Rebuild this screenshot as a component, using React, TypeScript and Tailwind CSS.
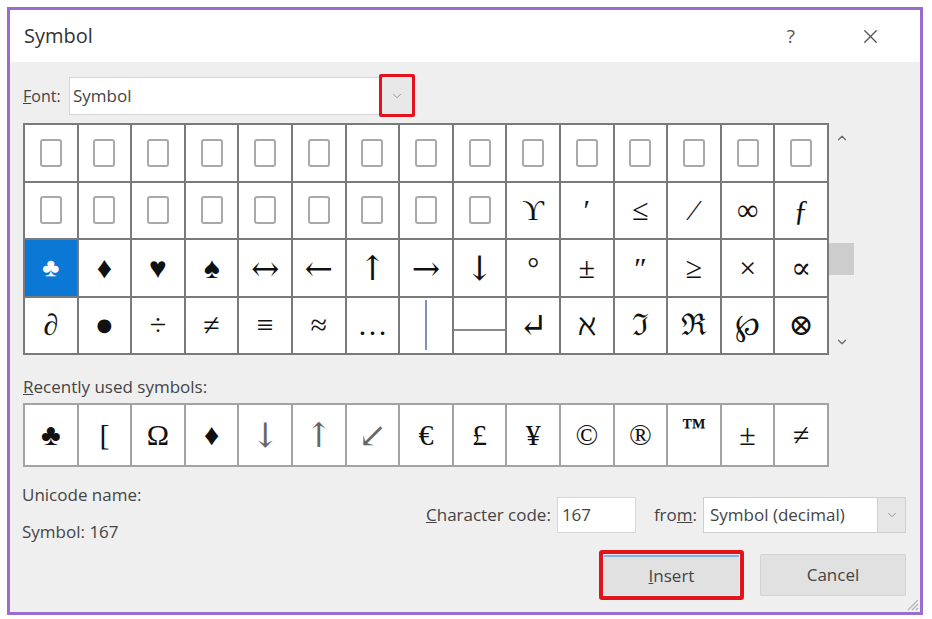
import React from "react";
import { ChevronDown, ChevronUp, X } from "lucide-react";

// one glyph per cell; "" means a tofu box, "|" and "-" are drawn lines
const rows: string[][] = [
  Array(15).fill(""),
  [...Array(9).fill(""), "ϒ", "′", "≤", "⁄", "∞", "ƒ"],
  ["♣", "♦", "♥", "♠", "↔", "←", "↑", "→", "↓", "°", "±", "″", "≥", "×", "∝"],
  ["∂", "●", "÷", "≠", "≡", "≈", "…", "|", "-", "↵", "ℵ", "ℑ", "ℜ", "℘", "⊗"],
];

const recent = ["♣", "[", "Ω", "♦", "↓", "↑", "↙", "€", "£", "¥", "©", "®", "™", "±", "≠"];

const arrows = ["↔", "←", "↑", "→", "↓", "↵", "↙"];

const uiFont = "font-['Open_Sans','Noto_Sans',sans-serif]";
const glyphFont = "font-['Liberation_Serif','DejaVu_Serif',serif]";
const arrowFont = "font-['DejaVu_Serif',serif]";

function Glyph({ ch, muted }: { ch: string; muted?: boolean }) {
  if (ch === "") {
    return <div className="w-[22px] h-[28px] border-2 border-[#a9a9a9] rounded-[3px]" />;
  }
  if (ch === "|") {
    return <div className="w-[2px] h-[50px] bg-[#7d93b5]" />;
  }
  if (ch === "-") {
    return <div className="w-full h-[2px] bg-[#8a8a8a] mt-[10px]" />;
  }
  if (arrows.includes(ch)) {
    return (
      <span className={`${arrowFont} text-[34px] leading-none ${muted ? "text-[#666]" : "text-[#111]"}`}>
        {ch}
      </span>
    );
  }
  if (ch === "●") {
    return <span className={`${arrowFont} text-[18px] leading-none text-[#111]`}>{ch}</span>;
  }
  if (ch === "™") {
    return <span className={`${glyphFont} text-[24px] font-bold leading-none -mt-[16px] text-[#111]`}>{ch}</span>;
  }
  return <span className={`${glyphFont} text-[30px] leading-none text-[#111]`}>{ch}</span>;
}

export default function App() {
  return (
    <div className={`w-[932px] h-[619px] bg-white pt-[7px] pl-[7px] ${uiFont}`}>
      <div className="relative w-[916px] h-[608px] border-[3px] border-[#9a6cce] flex flex-col bg-[#efefef]">
        {/* title bar */}
        <div className="h-[52px] bg-white flex items-center pl-[14px] pr-[38px] shrink-0">
          <span className="text-[20px] text-[#333]">Symbol</span>
          <span className="ml-auto text-[19px] text-[#555] mr-[64px]">?</span>
          <X size={23} strokeWidth={1.4} className="text-[#555]" />
        </div>

        <div className="flex flex-col pl-[13px] pr-[14px] text-[17px] text-[#444]">
          {/* font row */}
          <div className="flex items-center mt-[12px] h-[43px]">
            <span className="w-[46px] text-[16px]">
              <span className="underline">F</span>ont:
            </span>
            <div className="flex items-center w-[346px] h-[38px] bg-white border border-[#d6d6d6]">
              <span className="pl-[3px]">Symbol</span>
              <div className="ml-auto w-[36px] h-[43px] border-[3px] border-[#e3131b] rounded-[2px] bg-[#e8e8e8] flex items-center justify-center -mr-[1px]">
                <ChevronDown size={14} strokeWidth={1.5} className="text-[#8a8a8a]" />
              </div>
            </div>
          </div>

          {/* symbol grid + scrollbar */}
          <div className="flex mt-[6px]">
            <div className="w-[806px] h-[232px] grid grid-cols-[repeat(15,1fr)] grid-rows-4 gap-[2px] border-2 border-[#7a7a7a] bg-[#7a7a7a]">
              {rows.map((r, ri) =>
                r.map((ch, ci) => {
                  const sel = ri === 2 && ci === 0;
                  return (
                    <div
                      key={`${ri}-${ci}`}
                      className={`flex items-center justify-center ${sel ? "bg-[#0a78d4]" : "bg-white"}`}
                    >
                      {sel ? (
                        <span className={`${glyphFont} text-[26px] leading-none text-white`}>♣</span>
                      ) : (
                        <Glyph ch={ch} />
                      )}
                    </div>
                  );
                })
              )}
            </div>
            <div className="w-[26px] flex flex-col items-center">
              <ChevronUp size={14} strokeWidth={2} className="text-[#666] mt-[8px]" />
              <div className="w-[25px] h-[32px] bg-[#cdcdcd] mt-[98px] -ml-[1px]" />
              <ChevronDown size={14} strokeWidth={2} className="text-[#666] mt-auto mb-[6px]" />
            </div>
          </div>

          {/* recently used */}
          <div className="mt-[21px] leading-[22px]">
            <span className="underline">R</span>ecently used symbols:
          </div>
          <div className="mt-[5px] w-[806px] h-[64px] grid grid-cols-[repeat(15,1fr)] gap-[2px] border-2 border-[#a3a3a3] bg-[#a3a3a3]">
            {recent.map((ch, i) => (
              <div key={i} className="bg-white flex items-center justify-center">
                <Glyph ch={ch} muted />
              </div>
            ))}
          </div>

          {/* bottom */}
          <div className="flex">
            <div className="flex flex-col pt-[17px] leading-[22px] -ml-[1px]">
              <span>Unicode name:</span>
              <span className="mt-[15px]">Symbol: 167</span>
            </div>
            <div className="ml-auto flex flex-col items-end pt-[30px]">
              <div className="flex items-center">
                <span>
                  <span className="underline">C</span>haracter code:
                </span>
                <div className="ml-[6px] w-[79px] h-[36px] bg-white border border-[#d6d6d6] flex items-center pl-[4px]">
                  167
                </div>
                <span className="ml-[18px]">
                  fro<span className="underline">m</span>:
                </span>
                <div className="ml-[6px] w-[203px] h-[36px] bg-white border border-[#cfcfcf] flex items-center">
                  <span className="pl-[6px]">Symbol (decimal)</span>
                  <div className="ml-auto w-[28px] h-full bg-[#e6e6e6] border-l border-[#cfcfcf] flex items-center justify-center">
                    <ChevronDown size={14} strokeWidth={1.5} className="text-[#8a8a8a]" />
                  </div>
                </div>
              </div>
              <div className="flex items-center mt-[17px] gap-[16px]">
                <div className="w-[145px] h-[50px] border-[4px] border-[#e3131b] rounded-[3px] p-[1px]">
                  <div className="w-full h-full bg-[#e1e1e1] border-t-2 border-[#7fb2e6] flex items-center justify-center">
                    <span>
                      <span className="underline">I</span>nsert
                    </span>
                  </div>
                </div>
                <div className="w-[146px] h-[42px] bg-[#e1e1e1] border border-[#d2d2d2] rounded-[2px] flex items-center justify-center">
                  Cancel
                </div>
              </div>
            </div>
          </div>
        </div>

        {/* resize grip */}
        <svg className="absolute right-[1px] bottom-[1px]" width="14" height="14" viewBox="0 0 14 14">
          <path d="M13 3 L3 13 M13 7 L7 13 M13 11 L11 13" stroke="#b5b5b5" strokeWidth="1.2" />
        </svg>
      </div>
    </div>
  );
}
